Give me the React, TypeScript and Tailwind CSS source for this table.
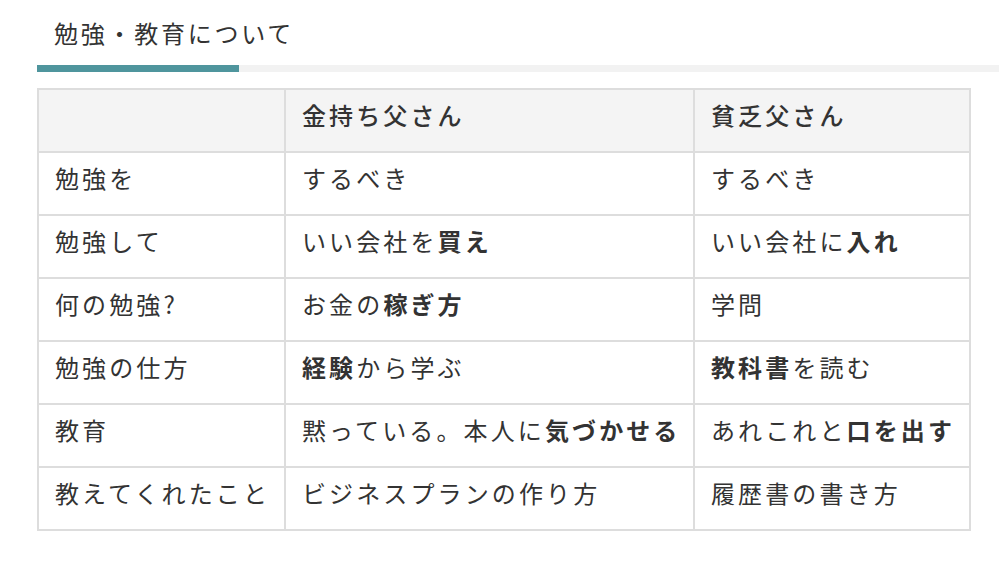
import React from "react";

type Cell = React.ReactNode;

const rows: Cell[][] = [
  ["勉強を", "するべき", "するべき"],
  [
    "勉強して",
    <>
      いい会社を<b className="font-semibold">買え</b>
    </>,
    <>
      いい会社に<b className="font-semibold">入れ</b>
    </>,
  ],
  [
    "何の勉強?",
    <>
      お金の<b className="font-semibold">稼ぎ方</b>
    </>,
    "学問",
  ],
  [
    "勉強の仕方",
    <>
      <b className="font-semibold">経験</b>から学ぶ
    </>,
    <>
      <b className="font-semibold">教科書</b>を読む
    </>,
  ],
  [
    "教育",
    <>
      黙っている。本人に<b className="font-semibold">気づかせる</b>
    </>,
    <>
      あれこれと<b className="font-semibold">口を出す</b>
    </>,
  ],
  ["教えてくれたこと", "ビジネスプランの作り方", "履歴書の書き方"],
];

const App = () => {
  return (
    <div
      className="min-h-[575px] bg-white pl-[37px] pt-[14px] text-[#333]"
      style={{ fontFamily: '"Noto Sans CJK JP", "Noto Sans", sans-serif' }}
    >
      <h2 className="pl-[17px] text-[24px] leading-[38px] tracking-[0.115em]">
        勉強・教育について
      </h2>
      <div className="mt-[13px] flex h-[7px]">
        <div className="w-[202px] bg-[#4f959d]" />
        <div className="flex-1 bg-[#f2f2f2]" />
      </div>

      <table className="mt-[16px] w-[932px] table-fixed border-collapse border-2 border-[#ddd] text-[24px] tracking-[0.13em]">
        <colgroup>
          <col className="w-[247px]" />
          <col className="w-[409px]" />
          <col className="w-[276px]" />
        </colgroup>
        <thead>
          <tr className="bg-[#f4f4f4]">
            <th className="border-2 border-[#ddd] px-4 pt-[6px] pb-[17px] text-left leading-[38px]" />
            <th className="border-2 border-[#ddd] px-4 pt-[6px] pb-[17px] text-left font-medium leading-[38px]">
              金持ち父さん
            </th>
            <th className="border-2 border-[#ddd] px-4 pt-[6px] pb-[17px] text-left font-medium leading-[38px]">
              貧乏父さん
            </th>
          </tr>
        </thead>
        <tbody>
          {rows.map((row, i) => (
            <tr key={i}>
              {row.map((cell, j) => (
                <td
                  key={j}
                  className="whitespace-nowrap border-2 border-[#ddd] px-4 pt-[6px] pb-[17px] align-top leading-[38px]"
                >
                  {cell}
                </td>
              ))}
            </tr>
          ))}
        </tbody>
      </table>
    </div>
  );
};

export default App;
